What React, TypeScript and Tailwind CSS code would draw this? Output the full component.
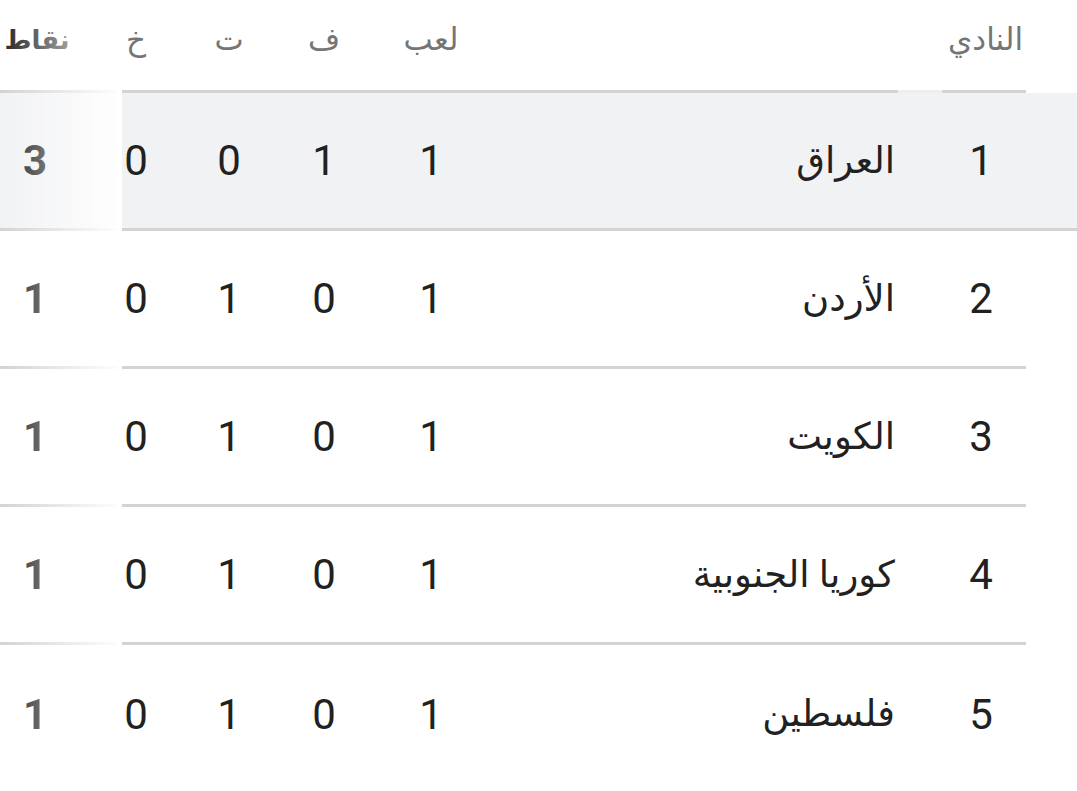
import React from "react";

const rows = [
  { rank: "1", team: "العراق", p: "1", w: "1", d: "0", l: "0", pts: "3" },
  { rank: "2", team: "الأردن", p: "1", w: "0", d: "1", l: "0", pts: "1" },
  { rank: "3", team: "الكويت", p: "1", w: "0", d: "1", l: "0", pts: "1" },
  { rank: "4", team: "كوريا الجنوبية", p: "1", w: "0", d: "1", l: "0", pts: "1" },
  { rank: "5", team: "فلسطين", p: "1", w: "0", d: "1", l: "0", pts: "1" },
];

const font = { fontFamily: "Roboto, 'DejaVu Sans', sans-serif" };

export default function App() {
  return (
    <div
      className="relative w-[1077px] h-[791px] bg-white overflow-hidden flex text-[#212121]"
      style={font}
    >
      {/* points column */}
      <div className="relative w-[118px] shrink-0 flex flex-col">
        <div className="h-[93px] border-b-[3px] border-[#d3d3d3] flex items-center pb-[10px]">
          <div className="w-[74px] flex justify-center text-[26px] font-bold text-[#222] whitespace-nowrap">
            <span dir="rtl">نقاط</span>
          </div>
        </div>
        {rows.map((r, i) => (
          <div
            key={i}
            className={
              "h-[138px] flex items-center " +
              (i === 0 ? "bg-[#f1f2f4] " : "") +
              (i < rows.length - 1 ? "border-b-[3px] border-[#d3d3d3]" : "")
            }
          >
            <div className="w-[70px] flex justify-center text-[42px] font-bold text-[#222]">
              {r.pts}
            </div>
          </div>
        ))}
        <div className="absolute inset-0 bg-linear-to-r from-white/0 to-white/95" />
      </div>

      <div className="w-[4px] shrink-0" />

      {/* main table */}
      <div className="flex-1 flex flex-col">
        {/* header */}
        <div className="h-[93px] flex text-[31px] text-[#757575]">
          <div className="w-[28px] h-full border-b-[3px] border-[#d3d3d3] flex items-center justify-center pb-[10px] whitespace-nowrap">خ</div>
          <div className="w-[158px] h-full border-b-[3px] border-[#d3d3d3] flex items-center justify-center pb-[10px]">ت</div>
          <div className="w-[32px] h-full border-b-[3px] border-[#d3d3d3] flex items-center justify-center pb-[10px] whitespace-nowrap">ف</div>
          <div className="w-[182px] h-full border-b-[3px] border-[#d3d3d3] flex items-center justify-center pb-[10px]">لعب</div>
          <div className="w-[376px] h-full border-b-[3px] border-[#d3d3d3]" />
          <div className="w-[44px] h-full border-b-[3px] border-[#eceef0]" />
          <div className="w-[84px] h-full border-b-[3px] border-[#d3d3d3] relative">
            <div className="absolute right-[3px] top-0 h-[80px] flex items-center whitespace-nowrap">
              <span dir="rtl">النادي</span>
            </div>
          </div>
        </div>

        {rows.map((r, i) => {
          const last = i === rows.length - 1;
          const first = i === 0;
          return (
            <div
              key={i}
              className={
                "h-[138px] flex " +
                (first ? "bg-[#f1f2f4] border-b-[3px] border-[#d3d3d3]" : "")
              }
            >
              <div
                className={
                  "w-[904px] flex items-center text-[42px] " +
                  (!first && !last ? "border-b-[3px] border-[#d3d3d3]" : "")
                }
              >
                <div className="w-[28px] flex justify-center">{r.l}</div>
                <div className="w-[158px] flex justify-center">{r.d}</div>
                <div className="w-[32px] flex justify-center">{r.w}</div>
                <div className="w-[182px] flex justify-center">{r.p}</div>
                <div className="w-[376px] flex justify-end pr-[3px] text-[37px] whitespace-nowrap">
                  <span dir="rtl">{r.team}</span>
                </div>
                <div className="w-[44px]" />
                <div className="w-[84px] flex justify-center pr-[6px]">{r.rank}</div>
              </div>
            </div>
          );
        })}
      </div>
    </div>
  );
}
